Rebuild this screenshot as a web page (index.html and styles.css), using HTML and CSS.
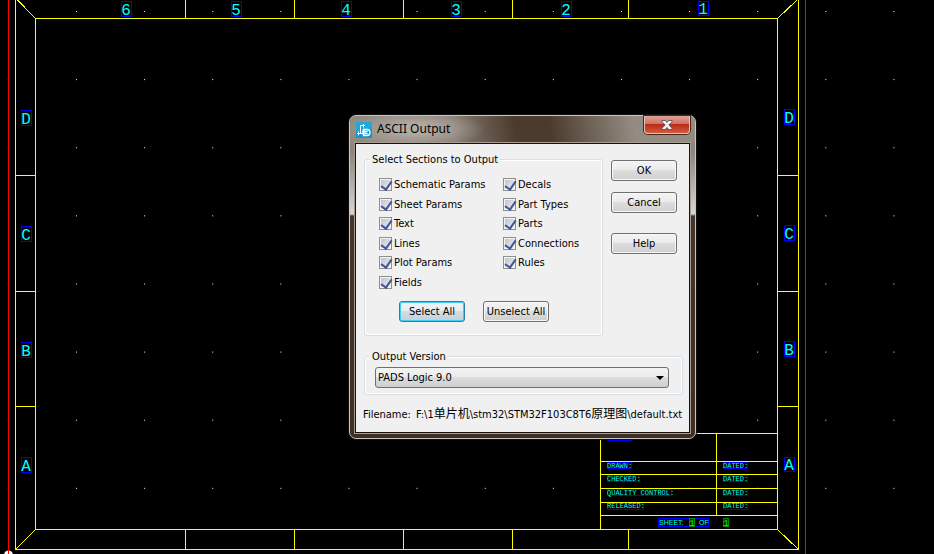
FILE: index.html
```html
<!DOCTYPE html>
<html lang="en">
<head>
<meta charset="utf-8">
<title>ASCII Output</title>
<link rel="stylesheet" href="styles.css">
</head>
<body>
<main class="workspace">
<svg class="sheet" width="100%" height="100%" aria-label="Schematic sheet">
  <defs>
    <pattern id="grid" x="76" y="11" width="68.12" height="68.12" patternUnits="userSpaceOnUse"><rect width="1" height="1" fill="#fff"/></pattern>
  </defs>
  <rect class="dots" width="100%" height="100%" fill="url(#grid)"/>
  <path class="edge" d="M8.500 0V554M805.500 0V554"/>
  <circle cx="8.500" cy="555" r="4.500" fill="#fff"/>
  <path class="edge" d="M8.500 549V554"/>
  <path class="rule" d="M15.500 0V549.500H798.500V0M35.500 18.500H777.500V529.500H35.500Z
    M185.500 0V18M294.500 0V18M403.500 0V18M512.500 0V18M628.500 0V18
    M185.500 530V549M294.500 530V549M403.500 530V549M512.500 530V549M628.500 530V549
    M16 175.500H35M16 291.500H35M16 406.500H35M778 175.500H798M778 291.500H798M778 406.500H798
    M600.500 529V433.500H777M716.500 433V515M600 461.500H777M600 474.500H777M600 488.500H777M600 502.500H777M600 515.500H777"/>
  <path class="rule" d="M17.500 0L35.500 18.500M797 0L777.500 18.500M15.500 549.500L35.500 529.500M798.500 549.500L777.500 529.500"/>
  <g class="zone">
    <rect x="121.500" y="1.500" width="10" height="15"/><rect x="231.500" y="1.500" width="10" height="15"/><rect x="341.500" y="1.500" width="10" height="15"/><rect x="451.500" y="1.500" width="10" height="15"/><rect x="561.500" y="1.500" width="10" height="15"/><rect x="698.500" y="1.500" width="10" height="14"/>
    <rect x="21.500" y="110.500" width="10" height="15"/><rect x="21.500" y="226.500" width="10" height="15"/><rect x="21.500" y="342.500" width="10" height="15"/><rect x="21.500" y="457.500" width="10" height="15"/>
    <rect x="784.500" y="109.500" width="10" height="15"/><rect x="784.500" y="225.500" width="10" height="15"/><rect x="784.500" y="341.500" width="10" height="15"/><rect x="784.500" y="457.500" width="10" height="14"/>
    <text x="126" y="15">6</text><text x="236" y="15">5</text><text x="346" y="15">4</text><text x="456" y="15">3</text><text x="566" y="15">2</text><text x="703" y="14">1</text>
    <text x="26" y="124">D</text><text x="26" y="240">C</text><text x="26" y="356">B</text><text x="26" y="471">A</text>
    <text x="789" y="123">D</text><text x="789" y="239">C</text><text x="789" y="355">B</text><text x="789" y="470">A</text>
  </g>
  <g class="block">
    <rect x="607.500" y="434.500" width="24" height="6"/>
    <rect x="607.500" y="462.500" width="24" height="6"/><rect x="607.500" y="475.500" width="32" height="6"/><rect x="607.500" y="489.500" width="64" height="6"/><rect x="607.500" y="503.500" width="36" height="6"/>
    <rect x="723.500" y="462.500" width="24" height="6"/><rect x="723.500" y="475.500" width="24" height="6"/><rect x="723.500" y="489.500" width="24" height="6"/><rect x="723.500" y="503.500" width="24" height="6"/>
    <rect x="658.500" y="518.500" width="50" height="8"/>
    <text x="607" y="468">DRAWN:</text><text x="607" y="481">CHECKED:</text><text x="607" y="495">QUALITY CONTROL:</text><text x="607" y="508">RELEASED:</text>
    <text x="723" y="468">DATED:</text><text x="723" y="481">DATED:</text><text x="723" y="495">DATED:</text><text x="723" y="508">DATED:</text>
    <text class="plain" x="659" y="525">SHEET:</text><text class="plain" x="699" y="525">OF</text>
  </g>
  <g class="number">
    <rect x="689.500" y="518.500" width="5" height="8"/><rect x="723.500" y="518.500" width="5" height="8"/>
    <text x="692" y="526">1</text><text x="726" y="526">1</text>
  </g>
</svg>

<section class="dialog" role="dialog" aria-labelledby="dialog-title">
  <header class="titlebar">
    <svg class="app-icon" width="16" height="16" viewBox="0 0 16 16" aria-hidden="true">
      <rect width="16" height="16" fill="#0f98cf"/><path d="M0 0H16V7L0 10Z" fill="#35b5e3" opacity=".5"/>
      <path d="M1 11.500H6M4.500 12V3.500H9M7.500 2V5.500M2.500 9.500V13.500" fill="none" stroke="#fff"/>
      <path d="M7.500 7.500H11Q14 7.500 14 10.500T11 13.500H7.500ZM6 9.500H11.500M6 11.500H11.500" fill="none" stroke="#fff" stroke-width="1.300"/>
    </svg>
    <h1 id="dialog-title">ASCII Output</h1>
    <button class="close" type="button" aria-label="Close">
      <svg width="12" height="10" viewBox="0 0 13 11" aria-hidden="true"><path d="M1 .5H4.500L6.500 2.700L8.500 .5H12V2L8.500 5.500L12 9V10.500H8.500L6.500 8.300L4.500 10.500H1V9L4.500 5.500L1 2Z" fill="#f4f4f4" stroke="#4b5368"/></svg>
    </button>
  </header>
  <form class="client">
    <div class="top">
      <fieldset class="sections">
        <legend>Select Sections to Output</legend>
        <div class="checks">
          <label><input type="checkbox" checked>Schematic Params</label>
          <label><input type="checkbox" checked>Sheet Params</label>
          <label><input type="checkbox" checked>Text</label>
          <label><input type="checkbox" checked>Lines</label>
          <label><input type="checkbox" checked>Plot Params</label>
          <label><input type="checkbox" checked>Fields</label>
          <label><input type="checkbox" checked>Decals</label>
          <label><input type="checkbox" checked>Part Types</label>
          <label><input type="checkbox" checked>Parts</label>
          <label><input type="checkbox" checked>Connections</label>
          <label><input type="checkbox" checked>Rules</label>
        </div>
        <div class="bulk">
          <button class="btn focused" type="button">Select All</button>
          <button class="btn" type="button">Unselect All</button>
        </div>
      </fieldset>
      <div class="actions">
        <button class="btn" type="button">OK</button>
        <button class="btn" type="button">Cancel</button>
        <button class="btn help" type="button">Help</button>
      </div>
    </div>
    <fieldset class="version">
      <legend><label for="version">Output Version</label></legend>
      <div class="combo"><select id="version"><option>PADS Logic 9.0</option></select></div>
    </fieldset>
    <p class="filename"><span>Filename:</span><span>F:\1<span class="cjk">单片机</span>\stm32\STM32F103C8T6<span class="cjk">原理图</span>\default.txt</span></p>
  </form>
</section>
</main>
</body>
</html>
```
FILE: styles.css
```css
* { box-sizing: border-box; }
body { margin: 0; background: #000; color: #000; font: 11px/13px "DejaVu Sans Condensed", "Noto Sans CJK SC", sans-serif; }
.workspace { position: relative; height: 100vh; overflow: hidden; }
.sheet { display: block; }
.dots, .edge, .rule, .sheet rect { shape-rendering: crispEdges; }
.edge { stroke: #f00; fill: none; }
.rule { stroke: #ff0; fill: none; }
.zone rect, .block rect { fill: none; stroke: #00f; }
.zone text { fill: #0ff; font: 16px "Liberation Mono", monospace; text-anchor: middle; }
.block text { fill: #0ff; font: 7px "Liberation Mono", monospace; }
.block .plain { font: 7px "Liberation Sans", sans-serif; }
.number rect { fill: #002800; stroke: #080; }
.number text { fill: #0f0; font: 9px "Liberation Mono", monospace; text-anchor: middle; }

.dialog {
  position: absolute; left: 349px; top: 115px; width: 347px;
  padding: 0 5px 5px; border: 1px solid #c9c4be; border-radius: 7px;
  background: linear-gradient(#92877d 0, #8e857c 36px, #d8d5d2 98px, #463528 100px, #3e2f24 100%);
  box-shadow: 0 0 0 1px #111;
}
.titlebar {
  display: flex; align-items: center; gap: 5px; height: 27px; margin: 0 -5px; padding-left: 6px;
  border-radius: 6px 6px 0 0;
  background: radial-gradient(ellipse 70px 20px at 65px 13px, #b3aca5 20%, transparent), linear-gradient(80deg, #938980 0, #857a70 30%, #4b3b2d 48%, #4b3b2d 58%, #948b82 82%);
}
h1 { flex: 1; margin: 0; padding-bottom: 2px; font: 12px/16px "Noto Sans", sans-serif; }
.close {
  display: flex; align-items: center; justify-content: center; align-self: flex-start;
  width: 46px; height: 18px; margin-right: 5px; padding: 0;
  border: 1px solid #e0c5bd; border-top: 0; border-radius: 0 0 4px 4px;
  background: linear-gradient(#dfa095, #d0705f 48%, #b82d15 50%, #d45a3c);
  box-shadow: 0 0 0 1px #44251d;
}
.client { padding: 9px 6px 11px 7px; border: 1px solid #17120e; background: #f0f0f0; box-shadow: 0 0 0 1px #a59c94; }
fieldset { min-width: 0; margin: 0; border: 1px solid #d5dfe5; border-radius: 3px; box-shadow: inset 0 0 0 1px #fff; }
legend { margin: 0; padding: 0 2px; background: #f0f0f0; }
.top { display: flex; gap: 8px; }
.sections { flex: 1; padding: 12px 8px 13px 14px; margin-left: 1px; }
.sections legend { margin-left: -9px; }
.checks { display: grid; grid-template: repeat(6, 13px) / 124px 1fr; grid-auto-flow: column; align-content: space-between; height: 111px; }
.checks label { display: flex; align-items: center; gap: 2px; white-space: nowrap; }
.checks input {
  appearance: none; width: 13px; height: 13px; margin: 0; border: 1px solid #8e8f8f;
  background: linear-gradient(135deg, #b9bfc8, #f4f4f4); box-shadow: inset 0 0 0 1px #f4f4f4; position: relative;
}
.checks input:checked::after { content: ""; position: absolute; left: 3px; top: 0; width: 5px; height: 9px; border: solid #42559b; border-width: 0 2px 2px 0; transform: rotate(35deg); }
.bulk { display: flex; gap: 18px; margin: 12px 0 0 20px; }
.btn {
  width: 66px; height: 21px; padding: 0; border: 1px solid #707070; border-radius: 3px; color: #000; font: inherit; white-space: nowrap;
  background: linear-gradient(#f3f3f3, #ebebeb 49%, #dddddd 50%, #cfcfcf); box-shadow: inset 0 0 0 1px #f8f8f8;
}
.focused { border-color: #2c7fa8; background: linear-gradient(#eff5f8, #e4ecf0 49%, #d2dee5 50%, #c2d0d9); box-shadow: inset 0 0 0 1px #42cdf5; }
.actions { display: flex; flex-direction: column; gap: 11px; padding: 7px 6px 0 0; }
.help { margin-top: 9px; }
.version { margin: 14px 0 0 1px; padding: 4px 13px 6px 10px; }
.version legend { margin-left: -5px; }
.combo { position: relative; }
.combo::after { content: ""; position: absolute; right: 5px; top: 9px; border: 4px solid transparent; border-top-color: #000; border-bottom: 0; pointer-events: none; }
select {
  appearance: none; display: block; width: 100%; height: 21px; padding: 0 2px; border: 1px solid #707070; border-radius: 3px; color: #000; font: inherit;
  background: linear-gradient(#f3f3f3, #ebebeb 49%, #dddddd 50%, #cfcfcf);
}
.filename { display: flex; gap: 5px; margin: 13px 0 0; white-space: nowrap; }
.cjk { font-size: 12px; }
```
